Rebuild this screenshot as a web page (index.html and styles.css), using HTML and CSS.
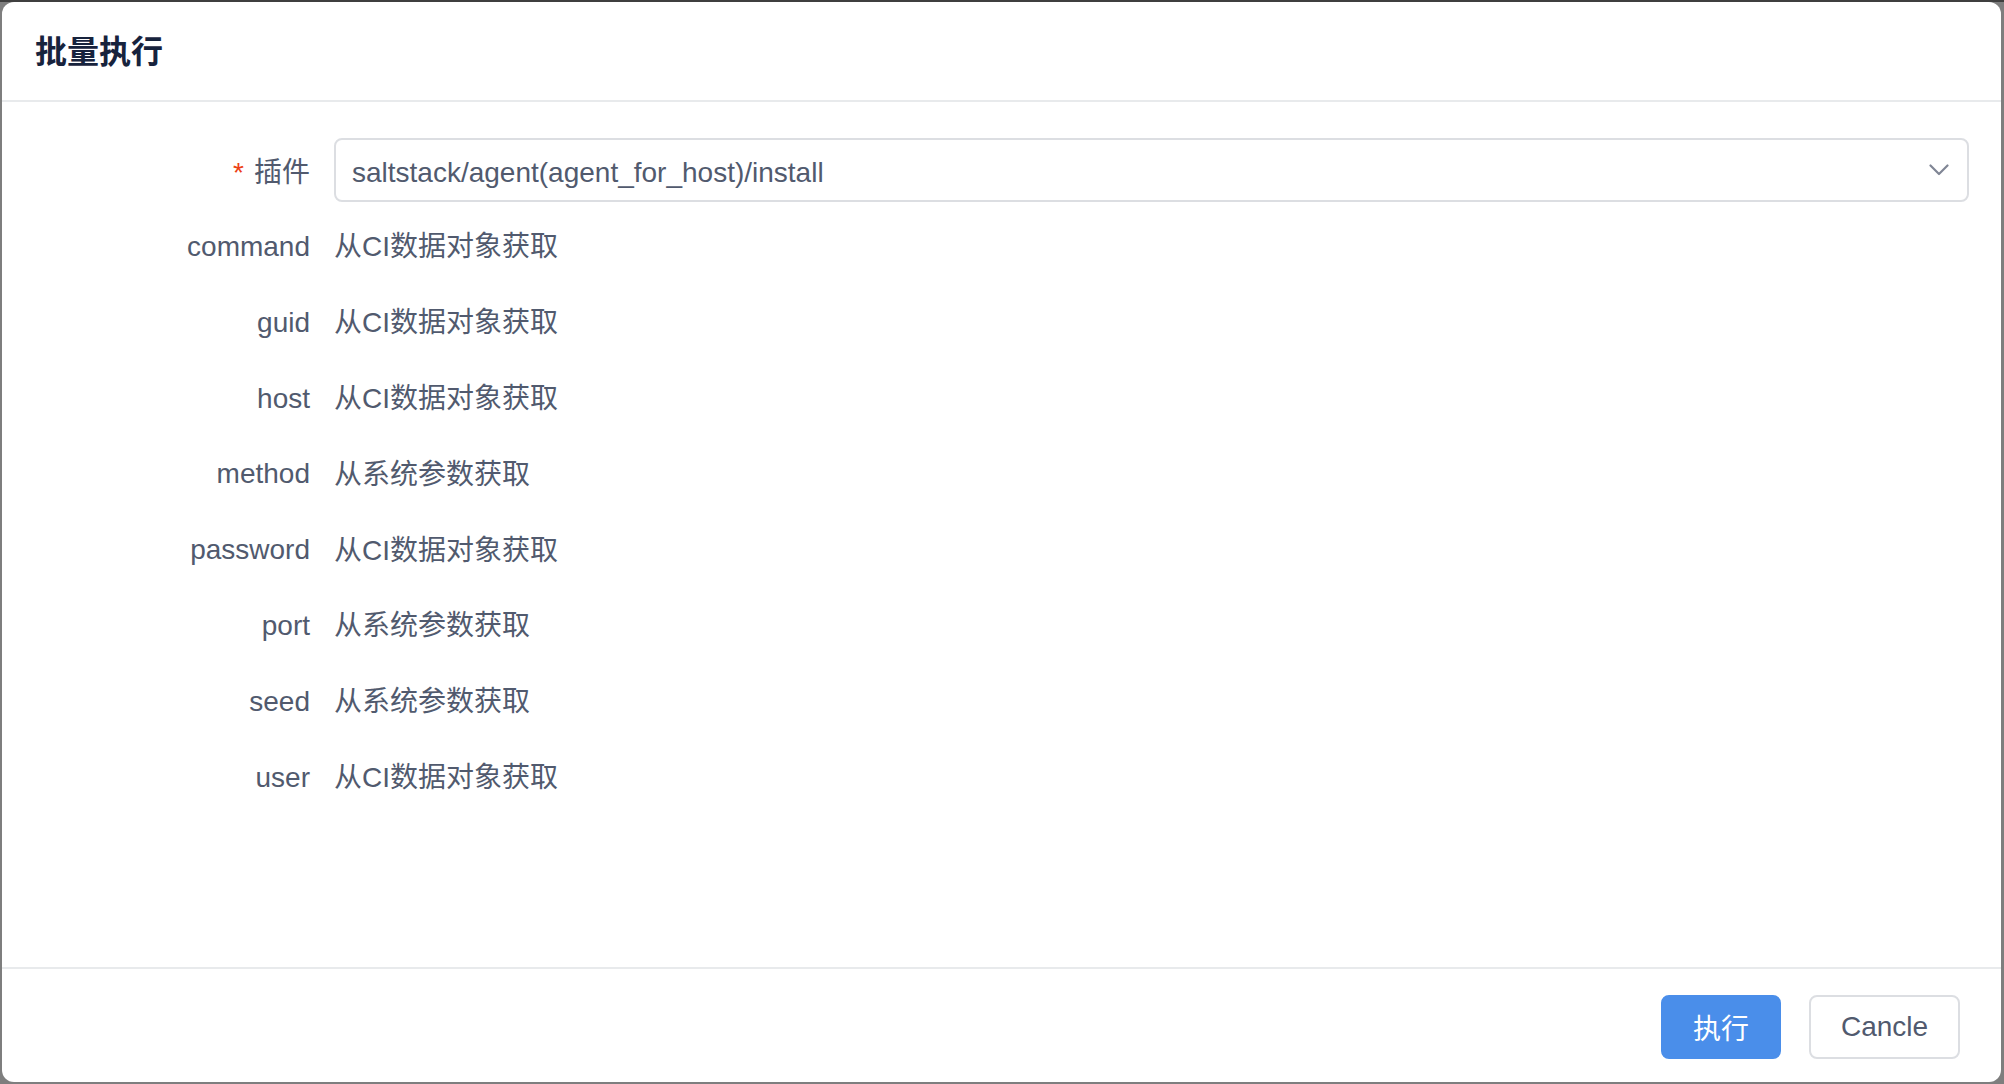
FILE: index.html
```html
<!DOCTYPE html>
<html lang="zh-CN">
<head>
<meta charset="utf-8">
<title>批量执行</title>
<link rel="stylesheet" href="styles.css">
</head>
<body>
<div class="modal">
  <div class="modal-header">
    <h1 class="modal-title">批量执行</h1>
  </div>
  <div class="modal-body">
    <div class="form-row form-row-select">
      <div class="form-label"><span class="req">*</span>插件</div>
      <div class="form-value">
        <div class="select">
          <span class="select-text">saltstack/agent(agent_for_host)/install</span>
          <svg class="select-arrow" width="20" height="12" viewBox="0 0 20 12"><path d="M1.5 1.5 L10 10 L18.5 1.5" fill="none" stroke="#808695" stroke-width="2.2" stroke-linecap="round" stroke-linejoin="round"/></svg>
        </div>
      </div>
    </div>
    <div class="form-row"><div class="form-label">command</div><div class="form-value">从CI数据对象获取</div></div>
    <div class="form-row"><div class="form-label">guid</div><div class="form-value">从CI数据对象获取</div></div>
    <div class="form-row"><div class="form-label">host</div><div class="form-value">从CI数据对象获取</div></div>
    <div class="form-row"><div class="form-label">method</div><div class="form-value">从系统参数获取</div></div>
    <div class="form-row"><div class="form-label">password</div><div class="form-value">从CI数据对象获取</div></div>
    <div class="form-row"><div class="form-label">port</div><div class="form-value">从系统参数获取</div></div>
    <div class="form-row"><div class="form-label">seed</div><div class="form-value">从系统参数获取</div></div>
    <div class="form-row"><div class="form-label">user</div><div class="form-value">从CI数据对象获取</div></div>
  </div>
  <div class="modal-footer">
    <button class="btn btn-primary">执行</button>
    <button class="btn btn-default">Cancle</button>
  </div>
</div>
</body>
</html>
```
FILE: styles.css
```css
* { box-sizing: border-box; }
html, body { margin: 0; padding: 0; }
body {
  background: #7e7e7e;
  border-top: 2px solid #3f3f3f;
  width: 2004px;
  height: 1084px;
  overflow: hidden;
  font-family: "Liberation Sans", "Noto Sans CJK SC", sans-serif;
  font-size: 28px;
  color: #515a6e;
}
.modal {
  margin: 0 3px 0 2px;
  height: 1080px;
  background: #fff;
  border-radius: 12px;
  display: flex;
  flex-direction: column;
  overflow: hidden;
}
.modal-header {
  height: 100px;
  border-bottom: 2px solid #e8eaec;
  display: flex;
  align-items: center;
  padding: 1px 33px 0;
}
.modal-title {
  margin: 0;
  font-size: 32px;
  font-weight: bold;
  color: #17233d;
  line-height: 44px;
}
.modal-body {
  flex: 1;
  padding: 36px 32px 0 0;
}
.form-row {
  display: flex;
  align-items: center;
  height: 75.8px;
}
.form-row .form-label {
  padding-top: 5px;
}
.form-row-select {
  height: 64px;
  margin-bottom: 4.6px;
}
.form-row-select .form-label {
  padding-top: 0;
}
.form-label {
  width: 332px;
  padding-right: 24px;
  text-align: right;
  flex-shrink: 0;
  color: #515a6e;
}
.req {
  color: #ed4014;
  margin-right: 10px;
}
.form-value {
  flex: 1;
  color: #515a6e;
}
.select {
  height: 64px;
  border: 2px solid #dcdee2;
  border-radius: 8px;
  display: flex;
  align-items: center;
  justify-content: space-between;
  padding: 0 18px 0 16px;
}
.select-text {
  color: #515a6e;
  padding-top: 5px;
}
.modal-footer {
  border-top: 2px solid #e8eaec;
  height: 115px;
  display: flex;
  justify-content: flex-end;
  align-items: flex-start;
  padding: 26px 41px 0 0;
  gap: 28px;
}
.btn {
  height: 64px;
  font-family: "Liberation Sans", "Noto Sans CJK SC", sans-serif;
  font-size: 28px;
  border-radius: 8px;
  padding: 0;
  cursor: pointer;
}
.btn-primary {
  width: 120px;
  background: #4a8eea;
  border: 2px solid #4a8eea;
  color: #fff;
}
.btn-default {
  width: 151px;
  background: #fff;
  border: 2px solid #dcdee2;
  color: #515a6e;
}
```
